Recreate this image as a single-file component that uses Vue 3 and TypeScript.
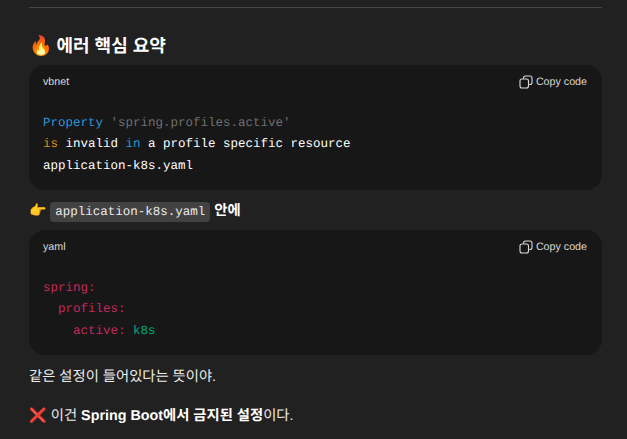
<script setup lang="ts">
interface Token { text: string; kind: string }
const vbnet: Token[][] = [
  [{ text: 'Property', kind: 'blue' }, { text: ' ', kind: '' }, { text: "'spring.profiles.active'", kind: 'gray' }],
  [{ text: 'is', kind: 'orange' }, { text: ' invalid ', kind: '' }, { text: 'in', kind: 'blue' }, { text: ' a profile specific resource', kind: '' }],
  [{ text: 'application-k8s.yaml', kind: '' }],
]
const yaml: Token[][] = [
  [{ text: 'spring:', kind: 'pink' }],
  [{ text: '  profiles:', kind: 'pink' }],
  [{ text: '    active:', kind: 'pink' }, { text: ' ', kind: '' }, { text: 'k8s', kind: 'green' }],
]
const blocks = { vbnet, yaml }
</script>

<template>
  <main class="page">
    <hr class="rule" />
    <h3 class="heading"><span class="emoji">🔥</span> 에러 핵심 요약</h3>
    <section class="code-block first">
      <header class="code-head">
        <span>vbnet</span>
        <span class="copy">
          <svg width="14" height="14" viewBox="0 0 14 14" fill="none" stroke="currentColor" stroke-width="1.1">
            <rect x="1" y="4" width="8.5" height="9" rx="2" />
            <path d="M4.5 3.5V3a2 2 0 0 1 2-2H11a2 2 0 0 1 2 2v4.5a2 2 0 0 1-2 2h-.8" />
          </svg>
          Copy code
        </span>
      </header>
      <pre class="code"><code><span v-for="(line, i) in blocks.vbnet" :key="i" class="line"><span v-for="(t, j) in line" :key="j" :class="t.kind">{{ t.text }}</span></span></code></pre>
    </section>
    <p class="pointer"><span class="hand">👉 </span><code class="inline">application-k8s.yaml</code> <strong>안에</strong></p>
    <section class="code-block">
      <header class="code-head">
        <span>yaml</span>
        <span class="copy">
          <svg width="14" height="14" viewBox="0 0 14 14" fill="none" stroke="currentColor" stroke-width="1.1">
            <rect x="1" y="4" width="8.5" height="9" rx="2" />
            <path d="M4.5 3.5V3a2 2 0 0 1 2-2H11a2 2 0 0 1 2 2v4.5a2 2 0 0 1-2 2h-.8" />
          </svg>
          Copy code
        </span>
      </header>
      <pre class="code"><code><span v-for="(line, i) in blocks.yaml" :key="i" class="line"><span v-for="(t, j) in line" :key="j" :class="t.kind">{{ t.text }}</span></span></code></pre>
    </section>
    <p class="text">같은 설정이 들어있다는 뜻이야.</p>
    <p class="text last">❌ 이건 <strong>Spring Boot에서 금지된 설정</strong>이다.</p>
  </main>
</template>

<style>
html, body { margin: 0; background: #212121; overflow: hidden; }
</style>

<style scoped>
.page {
  height: 439px;
  overflow: hidden;
  box-sizing: border-box;
  padding: 7px 25px 0 29px;
  background: #212121;
  color: #ececec;
  font-family: "Liberation Sans", "Noto Sans CJK KR", sans-serif;
  font-size: 14.32px;
  line-height: 22px;
  text-rendering: geometricPrecision;
}
.rule { margin: 0; border: 0; border-top: 1px solid #464646; }
.heading {
  margin: 27px 0 8px;
  font-size: 18px;
  line-height: 22px;
  font-weight: 600;
  color: #fff;
}
.emoji { font-size: 19px; line-height: 0; margin-right: -1.2px; }
.code-block { background: #171717; border-radius: 16px; }
.code-head {
  display: flex;
  justify-content: space-between;
  align-items: center;
  box-sizing: border-box;
  height: 32px;
  padding: 2px 15px 0 14px;
  font-size: 10.7px;
  color: #d9d9d9;
}
.copy { display: flex; align-items: center; gap: 3px; }
.code {
  margin: 0;
  padding: 15.9px 14px 12.6px;
  font-family: "Liberation Mono", monospace;
  font-size: 12.5px;
  line-height: 21.5px;
  color: #fff;
}
.code code { font-family: inherit; }
.line { display: block; }
.blue { color: #2e95d3; }
.gray { color: #6f6f6f; }
.orange { color: #df8e1d; }
.pink { color: #c22a5f; }
.green { color: #00a67d; }
.pointer { margin: 9px 0; height: 22px; color: #fff; }
.hand { font-size: 14px; }
.inline {
  font-family: "Liberation Mono", monospace;
  font-size: 12.5px;
  line-height: 1;
  background: #424242;
  border-radius: 4px;
  padding: 3px 5px;
  color: #ececec;
}
strong { font-weight: 600; color: #fff; }
.text { margin: 11px 0 0; }
.last { margin-top: 17px; }
</style>
